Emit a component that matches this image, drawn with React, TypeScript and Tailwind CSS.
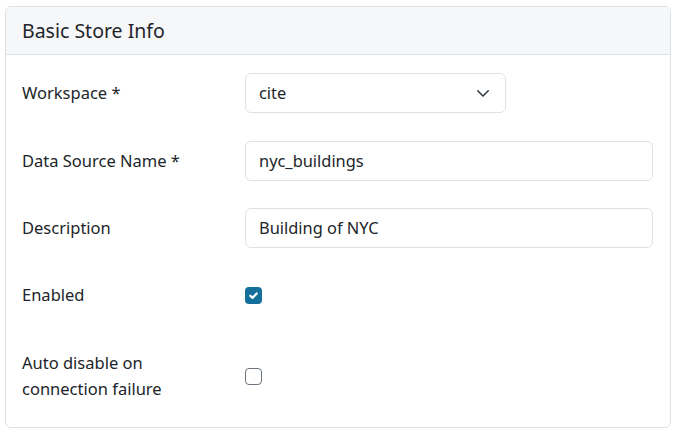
import React from "react";

const font = { fontFamily: '"Noto Sans", "Open Sans", sans-serif' };

function Row({ label, children, className = "" }: { label: React.ReactNode; children: React.ReactNode; className?: string }) {
  return (
    <div className={`flex items-center ${className}`}>
      <div className="w-[223px] shrink-0 text-[16.5px] leading-[26px] text-[#212529]">{label}</div>
      <div className="flex-1">{children}</div>
    </div>
  );
}

export default function App() {
  return (
    <div className="bg-white w-[676px] h-[433px] pt-[6px] pl-[5px]" style={font}>
      <div className="w-[666px] h-[422px] rounded-[6px] border border-[#dee2e6] overflow-hidden flex flex-col">
        <div className="h-[48px] bg-[#f6f7f9] border-b border-[#dee2e6] flex items-center px-[16px] text-[19.5px] text-[#212529]">
          Basic Store Info
        </div>
        <div className="pl-[16px] pr-[17px] pt-[18px] flex flex-col">
          <Row label="Workspace *">
            <div className="w-[261px] h-[40px] rounded-[6px] border border-[#dee2e6] flex items-center justify-between pl-[13px] pr-[15px] text-[16.4px] text-[#212529]">
              <span>cite</span>
              <svg width="14" height="14" viewBox="0 0 16 16" fill="none" stroke="#343a40" strokeWidth="1.8" strokeLinecap="round" strokeLinejoin="round">
                <path d="M2 5.5l6 6 6-6" />
              </svg>
            </div>
          </Row>
          <Row label="Data Source Name *" className="mt-[28px]">
            <div className="h-[40px] rounded-[6px] border border-[#dee2e6] flex items-center pl-[13px] text-[16.4px] text-[#212529]">
              nyc_buildings
            </div>
          </Row>
          <Row label="Description" className="mt-[27px]">
            <div className="h-[40px] rounded-[6px] border border-[#dee2e6] flex items-center pl-[13px] text-[16.4px] text-[#212529]">
              Building of NYC
            </div>
          </Row>
          <Row label="Enabled" className="mt-[27px] h-[40px]">
            <div className="w-[17px] h-[17px] rounded-[4px] bg-[#14709a] flex items-center justify-center">
              <svg width="11" height="11" viewBox="0 0 12 12" fill="none" stroke="white" strokeWidth="2.4" strokeLinecap="round" strokeLinejoin="round">
                <path d="M2.5 6.2l2.4 2.4L9.5 3.8" />
              </svg>
            </div>
          </Row>
          <Row label={<>Auto disable on<br />connection failure</>} className="mt-[35px]">
            <div className="w-[17px] h-[17px] rounded-[4px] border border-[#6c757d] bg-white" />
          </Row>
        </div>
      </div>
    </div>
  );
}
